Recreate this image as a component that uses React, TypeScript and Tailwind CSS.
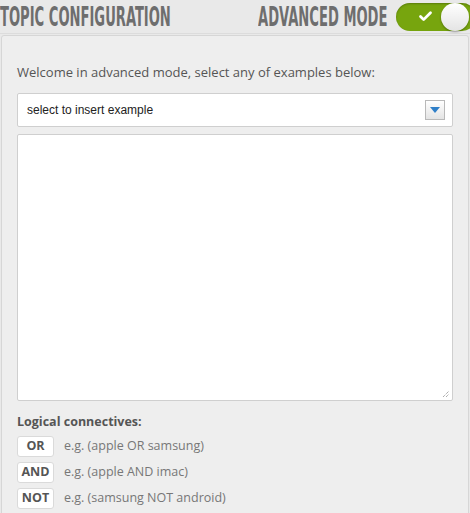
import { Check } from 'lucide-react'

const connectives = [
  { op: 'OR', example: 'e.g. (apple OR samsung)' },
  { op: 'AND', example: 'e.g. (apple AND imac)' },
  { op: 'NOT', example: 'e.g. (samsung NOT android)' },
]

function Toggle() {
  return (
    <div className="flex h-[28px] w-[80px] items-center rounded-full bg-[#77a50e] pl-[22px] shadow-[inset_0_1px_2px_rgba(0,0,0,0.25)]">
      <Check className="h-[15px] w-[15px] text-white" strokeWidth={4.5} />
      <div className="ml-[8px] h-[28px] w-[28px] rounded-full bg-gradient-to-b from-white to-[#e4e4e4] shadow-[0_1px_2px_rgba(0,0,0,0.35)]" />
    </div>
  )
}

export default function App() {
  return (
    <div className="h-[513px] w-[470px] overflow-hidden bg-[#e9e9e9] font-['Open_Sans',sans-serif]">
      {/* Header */}
      <div className="flex h-[34px] items-center justify-between border-b border-[#dcdcdc]">
        <div className="w-[170px]">
          <h1 className="origin-left scale-x-[0.54] whitespace-nowrap font-['DejaVu_Sans_Condensed',sans-serif] text-[27px] font-bold leading-none text-[#6e6e6e]">
            TOPIC CONFIGURATION
          </h1>
        </div>
        <div className="flex items-center">
          <div className="w-[138px]">
            <span className="block origin-left scale-x-[0.54] whitespace-nowrap font-['DejaVu_Sans_Condensed',sans-serif] text-[27px] font-bold leading-none text-[#6e6e6e]">
              ADVANCED MODE
            </span>
          </div>
          <div className="mr-[-6px]">
            <Toggle />
          </div>
        </div>
      </div>

      {/* Panel */}
      <div className="mx-[1px] mt-[1px] h-[520px] rounded-[3px] border border-[#d6d6d6] bg-[#eeeeee] px-[15px] pt-[28px]">
        <p className="text-[13px] leading-[16px] text-[#555]">
          Welcome in advanced mode, select any of examples below:
        </p>

        <div className="mt-[13px] flex h-[34px] items-center justify-between rounded-[2px] border border-[#cfcfcf] bg-white pl-[9px] pr-[7px] font-['Liberation_Sans',sans-serif] text-[12px] text-[#222]">
          <span>select to insert example</span>
          <div className="flex h-[20px] w-[20px] items-center justify-center border border-[#b9b9b9] bg-gradient-to-b from-white to-[#e4e4e4]">
            <svg width="10" height="6" viewBox="0 0 10 6">
              <path d="M0 0 H10 L5 6 Z" fill="#2f7fc8" />
            </svg>
          </div>
        </div>

        <div className="relative mt-[7px] h-[267px] rounded-[2px] border border-[#cfcfcf] bg-white">
          <svg className="absolute bottom-[2px] right-[2px]" width="8" height="8" viewBox="0 0 8 8">
            <path d="M1 7 L7 1 M4 7 L7 4" stroke="#8a8a8a" strokeWidth="1" strokeDasharray="1 1" />
          </svg>
        </div>

        <p className="mt-[13px] text-[12.5px] font-bold leading-[16px] text-[#555]">Logical connectives:</p>

        <div className="mt-[6px] flex flex-col gap-[5px]">
          {connectives.map((c) => (
            <div key={c.op} className="flex items-center">
              <span className="flex h-[21px] w-[37px] items-center justify-center rounded-[3px] border border-[#dadada] bg-white text-[12.5px] font-bold text-[#555]">
                {c.op}
              </span>
              <span className="ml-[10px] text-[12.5px] text-[#777]">{c.example}</span>
            </div>
          ))}
        </div>
      </div>
    </div>
  )
}
